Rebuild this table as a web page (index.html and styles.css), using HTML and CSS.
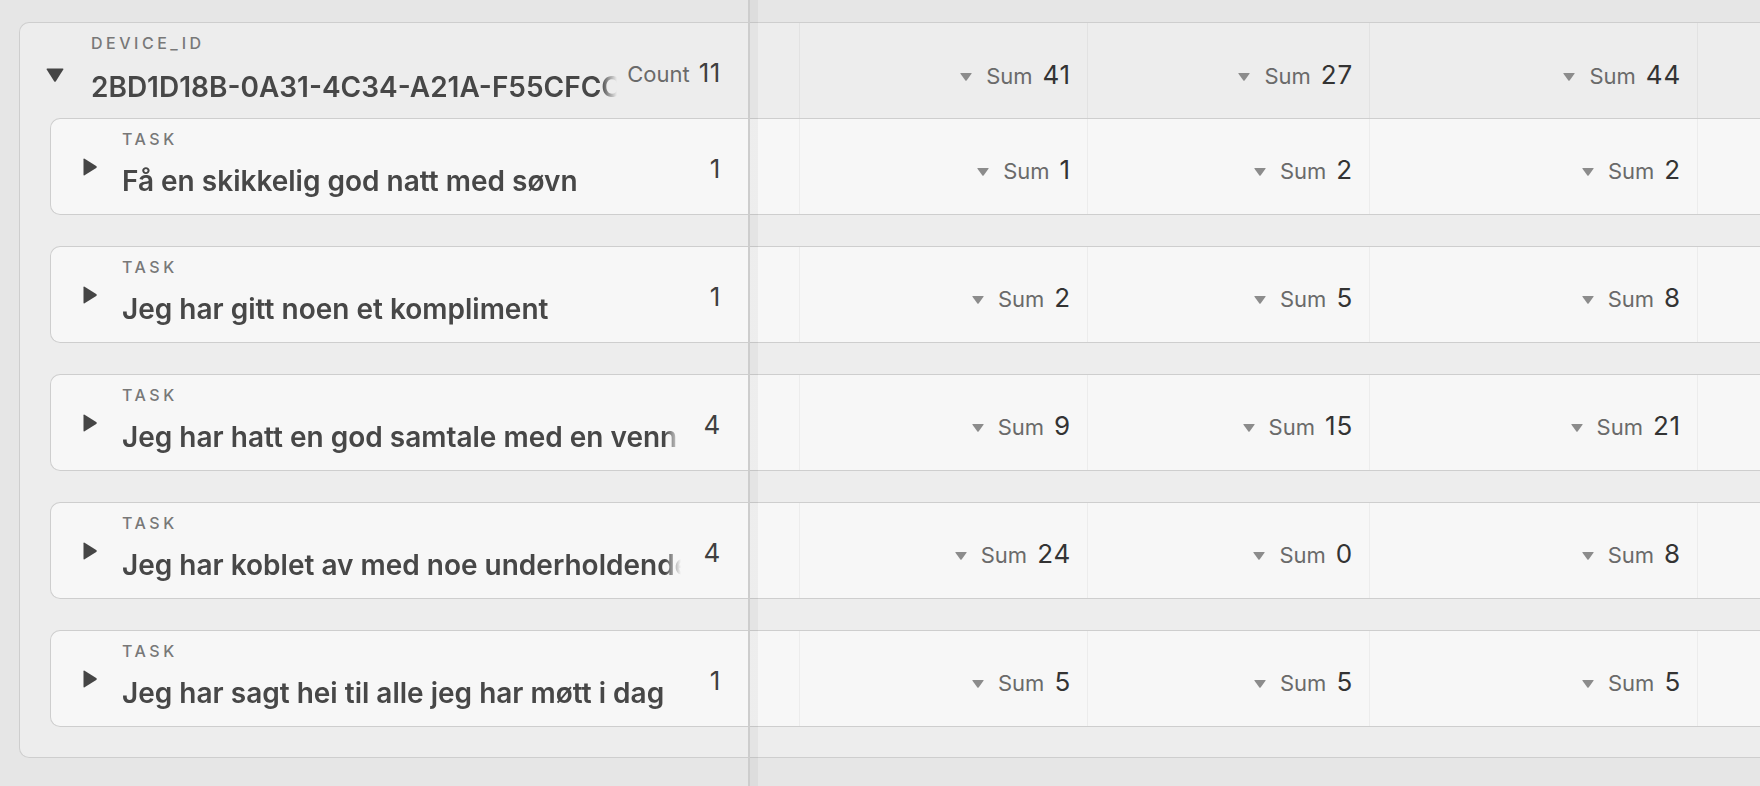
FILE: index.html
```html
<!DOCTYPE html>
<html lang="no">
<head>
<meta charset="utf-8">
<title>Pivot</title>
<link rel="stylesheet" href="styles.css">
</head>
<body>
<div class="board">
  <div class="group">
    <div class="row group-head">
      <div class="label">
        <div class="toggle"><svg class="tri-down" width="18" height="14" viewBox="0 0 18 14"><path d="M1.2 0.5 H16.8 Q18 0.5 17.3 1.6 L9.9 13.2 Q9 14.4 8.1 13.2 L0.7 1.6 Q0 0.5 1.2 0.5 Z"/></svg></div>
        <div class="text">
          <div class="kind">DEVICE_ID</div>
          <div class="title">2BD1D18B-0A31-4C34-A21A-F55CFCC1E2A4</div>
        </div>
        <div class="count"><span class="count-lbl">Count</span><span class="count-num">11</span></div>
      </div>
      <div class="cell spacer"></div>
      <div class="cell c1"><span class="agg"><svg class="mini" width="12" height="8" viewBox="0 0 12 8"><path d="M0.8 0 H11.2 Q12 0 11.5 0.8 L6.6 7.4 Q6 8.2 5.4 7.4 L0.5 0.8 Q0 0 0.8 0 Z"/></svg><span class="agg-lbl">Sum</span><span class="agg-num">41</span></span></div>
      <div class="cell c2"><span class="agg"><svg class="mini" width="12" height="8" viewBox="0 0 12 8"><path d="M0.8 0 H11.2 Q12 0 11.5 0.8 L6.6 7.4 Q6 8.2 5.4 7.4 L0.5 0.8 Q0 0 0.8 0 Z"/></svg><span class="agg-lbl">Sum</span><span class="agg-num">27</span></span></div>
      <div class="cell c3"><span class="agg"><svg class="mini" width="12" height="8" viewBox="0 0 12 8"><path d="M0.8 0 H11.2 Q12 0 11.5 0.8 L6.6 7.4 Q6 8.2 5.4 7.4 L0.5 0.8 Q0 0 0.8 0 Z"/></svg><span class="agg-lbl">Sum</span><span class="agg-num">44</span></span></div>
      <div class="cell c4"></div>
    </div>

    <div class="tasks">
      <div class="row task">
        <div class="label">
          <div class="toggle"><svg class="tri-right" width="14" height="18" viewBox="0 0 14 18"><path d="M0.5 1.2 V16.8 Q0.5 18 1.6 17.3 L13.2 9.9 Q14.4 9 13.2 8.1 L1.6 0.7 Q0.5 0 0.5 1.2 Z"/></svg></div>
          <div class="text">
            <div class="kind">TASK</div>
            <div class="title">Få en skikkelig god natt med søvn</div>
          </div>
          <div class="count"><span class="count-num">1</span></div>
        </div>
        <div class="cell spacer"></div>
        <div class="cell c1"><span class="agg"><svg class="mini" width="12" height="8" viewBox="0 0 12 8"><path d="M0.8 0 H11.2 Q12 0 11.5 0.8 L6.6 7.4 Q6 8.2 5.4 7.4 L0.5 0.8 Q0 0 0.8 0 Z"/></svg><span class="agg-lbl">Sum</span><span class="agg-num">1</span></span></div>
        <div class="cell c2"><span class="agg"><svg class="mini" width="12" height="8" viewBox="0 0 12 8"><path d="M0.8 0 H11.2 Q12 0 11.5 0.8 L6.6 7.4 Q6 8.2 5.4 7.4 L0.5 0.8 Q0 0 0.8 0 Z"/></svg><span class="agg-lbl">Sum</span><span class="agg-num">2</span></span></div>
        <div class="cell c3"><span class="agg"><svg class="mini" width="12" height="8" viewBox="0 0 12 8"><path d="M0.8 0 H11.2 Q12 0 11.5 0.8 L6.6 7.4 Q6 8.2 5.4 7.4 L0.5 0.8 Q0 0 0.8 0 Z"/></svg><span class="agg-lbl">Sum</span><span class="agg-num">2</span></span></div>
        <div class="cell c4"></div>
      </div>

      <div class="row task">
        <div class="label">
          <div class="toggle"><svg class="tri-right" width="14" height="18" viewBox="0 0 14 18"><path d="M0.5 1.2 V16.8 Q0.5 18 1.6 17.3 L13.2 9.9 Q14.4 9 13.2 8.1 L1.6 0.7 Q0.5 0 0.5 1.2 Z"/></svg></div>
          <div class="text">
            <div class="kind">TASK</div>
            <div class="title">Jeg har gitt noen et kompliment</div>
          </div>
          <div class="count"><span class="count-num">1</span></div>
        </div>
        <div class="cell spacer"></div>
        <div class="cell c1"><span class="agg"><svg class="mini" width="12" height="8" viewBox="0 0 12 8"><path d="M0.8 0 H11.2 Q12 0 11.5 0.8 L6.6 7.4 Q6 8.2 5.4 7.4 L0.5 0.8 Q0 0 0.8 0 Z"/></svg><span class="agg-lbl">Sum</span><span class="agg-num">2</span></span></div>
        <div class="cell c2"><span class="agg"><svg class="mini" width="12" height="8" viewBox="0 0 12 8"><path d="M0.8 0 H11.2 Q12 0 11.5 0.8 L6.6 7.4 Q6 8.2 5.4 7.4 L0.5 0.8 Q0 0 0.8 0 Z"/></svg><span class="agg-lbl">Sum</span><span class="agg-num">5</span></span></div>
        <div class="cell c3"><span class="agg"><svg class="mini" width="12" height="8" viewBox="0 0 12 8"><path d="M0.8 0 H11.2 Q12 0 11.5 0.8 L6.6 7.4 Q6 8.2 5.4 7.4 L0.5 0.8 Q0 0 0.8 0 Z"/></svg><span class="agg-lbl">Sum</span><span class="agg-num">8</span></span></div>
        <div class="cell c4"></div>
      </div>

      <div class="row task">
        <div class="label">
          <div class="toggle"><svg class="tri-right" width="14" height="18" viewBox="0 0 14 18"><path d="M0.5 1.2 V16.8 Q0.5 18 1.6 17.3 L13.2 9.9 Q14.4 9 13.2 8.1 L1.6 0.7 Q0.5 0 0.5 1.2 Z"/></svg></div>
          <div class="text">
            <div class="kind">TASK</div>
            <div class="title">Jeg har hatt en god samtale med en venn</div>
          </div>
          <div class="count"><span class="count-num">4</span></div>
        </div>
        <div class="cell spacer"></div>
        <div class="cell c1"><span class="agg"><svg class="mini" width="12" height="8" viewBox="0 0 12 8"><path d="M0.8 0 H11.2 Q12 0 11.5 0.8 L6.6 7.4 Q6 8.2 5.4 7.4 L0.5 0.8 Q0 0 0.8 0 Z"/></svg><span class="agg-lbl">Sum</span><span class="agg-num">9</span></span></div>
        <div class="cell c2"><span class="agg"><svg class="mini" width="12" height="8" viewBox="0 0 12 8"><path d="M0.8 0 H11.2 Q12 0 11.5 0.8 L6.6 7.4 Q6 8.2 5.4 7.4 L0.5 0.8 Q0 0 0.8 0 Z"/></svg><span class="agg-lbl">Sum</span><span class="agg-num">15</span></span></div>
        <div class="cell c3"><span class="agg"><svg class="mini" width="12" height="8" viewBox="0 0 12 8"><path d="M0.8 0 H11.2 Q12 0 11.5 0.8 L6.6 7.4 Q6 8.2 5.4 7.4 L0.5 0.8 Q0 0 0.8 0 Z"/></svg><span class="agg-lbl">Sum</span><span class="agg-num">21</span></span></div>
        <div class="cell c4"></div>
      </div>

      <div class="row task">
        <div class="label">
          <div class="toggle"><svg class="tri-right" width="14" height="18" viewBox="0 0 14 18"><path d="M0.5 1.2 V16.8 Q0.5 18 1.6 17.3 L13.2 9.9 Q14.4 9 13.2 8.1 L1.6 0.7 Q0.5 0 0.5 1.2 Z"/></svg></div>
          <div class="text">
            <div class="kind">TASK</div>
            <div class="title">Jeg har koblet av med noe underholdende</div>
          </div>
          <div class="count"><span class="count-num">4</span></div>
        </div>
        <div class="cell spacer"></div>
        <div class="cell c1"><span class="agg"><svg class="mini" width="12" height="8" viewBox="0 0 12 8"><path d="M0.8 0 H11.2 Q12 0 11.5 0.8 L6.6 7.4 Q6 8.2 5.4 7.4 L0.5 0.8 Q0 0 0.8 0 Z"/></svg><span class="agg-lbl">Sum</span><span class="agg-num">24</span></span></div>
        <div class="cell c2"><span class="agg"><svg class="mini" width="12" height="8" viewBox="0 0 12 8"><path d="M0.8 0 H11.2 Q12 0 11.5 0.8 L6.6 7.4 Q6 8.2 5.4 7.4 L0.5 0.8 Q0 0 0.8 0 Z"/></svg><span class="agg-lbl">Sum</span><span class="agg-num">0</span></span></div>
        <div class="cell c3"><span class="agg"><svg class="mini" width="12" height="8" viewBox="0 0 12 8"><path d="M0.8 0 H11.2 Q12 0 11.5 0.8 L6.6 7.4 Q6 8.2 5.4 7.4 L0.5 0.8 Q0 0 0.8 0 Z"/></svg><span class="agg-lbl">Sum</span><span class="agg-num">8</span></span></div>
        <div class="cell c4"></div>
      </div>

      <div class="row task">
        <div class="label">
          <div class="toggle"><svg class="tri-right" width="14" height="18" viewBox="0 0 14 18"><path d="M0.5 1.2 V16.8 Q0.5 18 1.6 17.3 L13.2 9.9 Q14.4 9 13.2 8.1 L1.6 0.7 Q0.5 0 0.5 1.2 Z"/></svg></div>
          <div class="text">
            <div class="kind">TASK</div>
            <div class="title">Jeg har sagt hei til alle jeg har møtt i dag</div>
          </div>
          <div class="count"><span class="count-num">1</span></div>
        </div>
        <div class="cell spacer"></div>
        <div class="cell c1"><span class="agg"><svg class="mini" width="12" height="8" viewBox="0 0 12 8"><path d="M0.8 0 H11.2 Q12 0 11.5 0.8 L6.6 7.4 Q6 8.2 5.4 7.4 L0.5 0.8 Q0 0 0.8 0 Z"/></svg><span class="agg-lbl">Sum</span><span class="agg-num">5</span></span></div>
        <div class="cell c2"><span class="agg"><svg class="mini" width="12" height="8" viewBox="0 0 12 8"><path d="M0.8 0 H11.2 Q12 0 11.5 0.8 L6.6 7.4 Q6 8.2 5.4 7.4 L0.5 0.8 Q0 0 0.8 0 Z"/></svg><span class="agg-lbl">Sum</span><span class="agg-num">5</span></span></div>
        <div class="cell c3"><span class="agg"><svg class="mini" width="12" height="8" viewBox="0 0 12 8"><path d="M0.8 0 H11.2 Q12 0 11.5 0.8 L6.6 7.4 Q6 8.2 5.4 7.4 L0.5 0.8 Q0 0 0.8 0 Z"/></svg><span class="agg-lbl">Sum</span><span class="agg-num">5</span></span></div>
        <div class="cell c4"></div>
      </div>
    </div>
  </div>
</div>
<div class="divider"></div>
</body>
</html>
```

FILE: styles.css
```css
* { box-sizing: border-box; }

html, body {
  margin: 0;
  height: 100%;
}

body {
  background: #e6e6e6;
  font-family: Inter, "Noto Sans", "Liberation Sans", sans-serif;
  color: #454545;
  overflow: hidden;
  position: relative;
}

.board {
  padding: 22px 0 0 19px;
}

.group {
  background: #ededed;
  border: 1px solid #cecece;
  border-right: none;
  border-radius: 10px 0 0 10px;
}

.row {
  display: flex;
  height: 95px;
}

.task {
  height: 97px;
  background: #f7f7f7;
  border: 1px solid #cecece;
  border-right: none;
  border-radius: 10px 0 0 10px;
}

.tasks {
  display: flex;
  flex-direction: column;
  gap: 31px;
  padding: 0 0 30px 30px;
}

/* pinned label column */
.label {
  display: flex;
  align-items: flex-start;
  flex: none;
  padding: 10px 27px 0 0;
}

.group-head .label { width: 728px; }
.task .label { width: 697px; }

.toggle {
  flex: none;
  width: 71px;
}

.tri-down {
  display: block;
  fill: #454545;
  margin: 35px 0 0 26px;
}

.tri-right {
  display: block;
  fill: #454545;
  margin: 29px 0 0 32px;
}

.text {
  flex: 1 1 auto;
  min-width: 0;
}

.kind {
  font-size: 16px;
  line-height: 20px;
  letter-spacing: 3.5px;
  color: #787878;
  font-weight: 500;
}

.title {
  font-size: 28px;
  line-height: 32px;
  font-weight: 600;
  color: #474747;
  white-space: nowrap;
  overflow: hidden;
  -webkit-mask-image: linear-gradient(to right, #000 calc(100% - 16px), transparent);
  mask-image: linear-gradient(to right, #000 calc(100% - 16px), transparent);
}

.group-head .title { margin-top: 18px; }
.task .title { margin-top: 16px; }

.count {
  flex: none;
  min-width: 36px;
  margin: 25px 0 0 10px;
  text-align: right;
  line-height: 30px;
  white-space: nowrap;
}

.task .count { margin-left: 4px; }

.count-lbl {
  font-size: 22px;
  color: #6a6a6a;
  margin-right: 9px;
}

.count-num {
  font-size: 26px;
  letter-spacing: 0.6px;
  color: #3f3f3f;
}

/* value columns */
.cell {
  flex: none;
  height: 100%;
  border-left: 1px solid rgba(0, 0, 0, 0.045);
  padding: 37px 16px 0 0;
  text-align: right;
  line-height: 30px;
  font-size: 26px;
  white-space: nowrap;
}

.task .cell { padding-top: 36px; }

.spacer { width: 51px; border-left: none; }
.c1 { width: 288px; }
.c2 { width: 282px; }
.c3 { width: 328px; }
.c4 { flex: 1 1 auto; }

.mini {
  fill: #8c8c8c;
  vertical-align: 3px;
  margin-right: 14px;
}

.agg-lbl {
  font-size: 22px;
  color: #6a6a6a;
  margin-right: 10px;
}

.agg-num {
  font-size: 26px;
  letter-spacing: 0.8px;
  color: #333;
}

/* frozen pane edge */
.divider {
  position: absolute;
  top: 0;
  bottom: 0;
  left: 748px;
  width: 10px;
  background: linear-gradient(to right, #cdcdcd 0, #cdcdcd 2px, rgba(0, 0, 0, 0.04) 2px, rgba(0, 0, 0, 0.04) 10px);
  pointer-events: none;
}
```
